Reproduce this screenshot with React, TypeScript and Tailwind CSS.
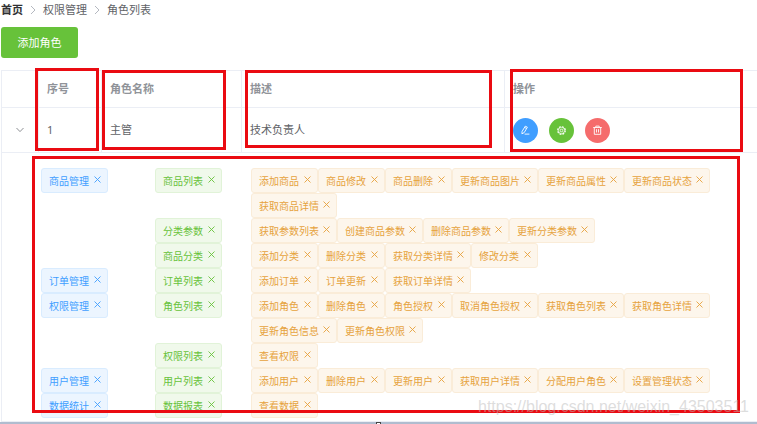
import { useState } from 'react'
import clsx from 'clsx'

type TagType = 'primary' | 'success' | 'warning'

interface Permission {
  name: string
  children: {
    name: string
    actions: string[]
  }[]
}

const rights: Permission[] = [
  {
    name: '商品管理',
    children: [
      {
        name: '商品列表',
        actions: ['添加商品', '商品修改', '商品删除', '更新商品图片', '更新商品属性', '更新商品状态', '获取商品详情'],
      },
      { name: '分类参数', actions: ['获取参数列表', '创建商品参数', '删除商品参数', '更新分类参数'] },
      { name: '商品分类', actions: ['添加分类', '删除分类', '获取分类详情', '修改分类'] },
    ],
  },
  {
    name: '订单管理',
    children: [{ name: '订单列表', actions: ['添加订单', '订单更新', '获取订单详情'] }],
  },
  {
    name: '权限管理',
    children: [
      {
        name: '角色列表',
        actions: ['添加角色', '删除角色', '角色授权', '取消角色授权', '获取角色列表', '获取角色详情', '更新角色信息', '更新角色权限'],
      },
      { name: '权限列表', actions: ['查看权限'] },
    ],
  },
  {
    name: '用户管理',
    children: [
      {
        name: '用户列表',
        actions: ['添加用户', '删除用户', '更新用户', '获取用户详情', '分配用户角色', '设置管理状态'],
      },
    ],
  },
  {
    name: '数据统计',
    children: [{ name: '数据报表', actions: ['查看数据'] }],
  },
]

const tagColors: Record<TagType, string> = {
  primary: 'border-[#d9ecff] bg-[#ecf5ff] text-[#409eff]',
  success: 'border-[#e1f3d8] bg-[#f0f9eb] text-[#67c23a]',
  warning: 'border-[#faecd8] bg-[#fdf6ec] text-[#e6a23c]',
}

function Tag({ type, children }: { type: TagType; children: string }) {
  return (
    <span
      className={clsx(
        'flex h-[25px] shrink-0 items-center justify-between whitespace-nowrap rounded-[3px] border pl-[7px] pr-[6px] text-[10px]',
        children.length > 4 ? 'w-[86px]' : 'w-[67px]',
        tagColors[type],
      )}
    >
      {children}
      <button type="button" aria-label={`移除${children}`} className="pb-[2px]">
        <svg className="h-[7px] w-[7px]" viewBox="0 0 7 7" fill="none" stroke="currentColor" strokeWidth="0.9">
          <path d="M0.5 0.5 6.5 6.5M6.5 0.5 0.5 6.5" />
        </svg>
      </button>
    </span>
  )
}

function Separator() {
  return (
    <svg className="h-[10px] w-[6px]" viewBox="0 0 6 10" fill="none" stroke="#b4b8c0" aria-hidden="true">
      <path d="M1 1 5 5 1 9" />
    </svg>
  )
}

function EditIcon() {
  return (
    <svg className="h-[11px] w-[11px]" viewBox="0 0 11 11" fill="none" stroke="currentColor" strokeWidth="0.9">
      <path d="M5.3 1.2 7.4 2.2 4.2 7.6 1.9 8.8 2.1 6.4ZM4.6 2.4 6.7 3.5M4.6 9.1H9.4" />
    </svg>
  )
}

function SettingIcon() {
  return (
    <svg className="h-[11px] w-[11px]" viewBox="0 0 11 11" fill="none" stroke="currentColor">
      <circle cx="5.5" cy="5.5" r="3.8" strokeWidth="1.2" strokeDasharray="1.9 1.08" />
      <circle cx="5.5" cy="5.5" r="3.1" strokeWidth="0.7" />
      <circle cx="5.5" cy="5.5" r="1.3" strokeWidth="0.8" />
    </svg>
  )
}

function DeleteIcon() {
  return (
    <svg className="h-[11px] w-[11px]" viewBox="0 0 11 11" fill="none" stroke="currentColor" strokeWidth="0.9">
      <path d="M1.2 2.5H9.8M3.8 2.3V1.1H7.2V2.3M2.3 2.6V9.3H8.7V2.6M4.5 4.2V7.5M6.5 4.2V7.5" />
    </svg>
  )
}

const headCell = 'border-b border-r border-[#ebeef5] px-2 text-left font-bold text-[#909399]'
const bodyCell = 'border-b border-r border-[#ebeef5] px-2'
const round = 'flex h-[25px] w-[25px] items-center justify-center rounded-full text-white'
const mark = 'pointer-events-none absolute border-3 border-[#ea0b12]'

export default function App() {
  const [open, setOpen] = useState(true)

  return (
    <div className="relative overflow-hidden bg-white font-['Noto_Sans','Noto_Sans_CJK_SC',sans-serif] text-[11px] leading-4 text-[#606266]">
      <main className="pl-px">
        <nav className="flex items-center gap-[7px] pt-[2px]">
          <a href="#home" className="font-bold text-[#303133]">
            首页
          </a>
          <Separator />
          <a href="#rights">权限管理</a>
          <Separator />
          <span>角色列表</span>
        </nav>

        <button type="button" className="mt-[9px] block h-[31px] w-[77px] rounded-[3px] bg-[#67c23a] text-white">
          添加角色
        </button>

        <table className="mt-3 w-full table-fixed border-separate border-spacing-0 border-l border-t border-[#ebeef5]">
          <colgroup>
            <col className="w-[37px]" />
            <col className="w-[63px]" />
            <col className="w-[140px]" />
            <col className="w-[263px]" />
            <col />
          </colgroup>
          <thead>
            <tr className="h-[37px]">
              <th className={headCell}></th>
              <th className={headCell}>序号</th>
              <th className={headCell}>角色名称</th>
              <th className={headCell}>描述</th>
              <th className="border-b border-[#ebeef5] px-2 text-left font-bold text-[#909399]">操作</th>
            </tr>
          </thead>
          <tbody>
            <tr className="h-[45px]">
              <td className={bodyCell}>
                <button
                  type="button"
                  aria-label="展开"
                  aria-expanded={open}
                  onClick={() => setOpen(!open)}
                  className="flex w-full justify-center"
                >
                  <svg className="h-[6px] w-[8px]" viewBox="0 0 8 6" fill="none" stroke="#808388" strokeWidth="0.9">
                    <path d="M0.5 1 4 4.6 7.5 1" />
                  </svg>
                </button>
              </td>
              <td className={bodyCell}>1</td>
              <td className={bodyCell}>主管</td>
              <td className={bodyCell}>技术负责人</td>
              <td className="border-b border-[#ebeef5] px-2">
                <div className="flex gap-[11px]">
                  <button type="button" aria-label="编辑" className={clsx(round, 'bg-[#409eff]')}>
                    <EditIcon />
                  </button>
                  <button type="button" aria-label="分配权限" className={clsx(round, 'bg-[#67c23a]')}>
                    <SettingIcon />
                  </button>
                  <button type="button" aria-label="删除" className={clsx(round, 'bg-[#f56c6c]')}>
                    <DeleteIcon />
                  </button>
                </div>
              </td>
            </tr>
            {open && (
              <tr>
                <td colSpan={5} className="border-b border-[#ebeef5] pb-[3px] pl-[39px] pr-4 pt-[15px]">
                  {rights.map((item) => (
                    <div key={item.name} className="flex items-start">
                      <div className="w-[114px] shrink-0">
                        <Tag type="primary">{item.name}</Tag>
                      </div>
                      <div className="min-w-0 flex-1">
                        {item.children.map((sub) => (
                          <div key={sub.name} className="flex items-start">
                            <div className="w-24 shrink-0">
                              <Tag type="success">{sub.name}</Tag>
                            </div>
                            <div className="flex min-w-0 flex-1 flex-wrap">
                              {sub.actions.map((action) => (
                                <Tag key={action} type="warning">
                                  {action}
                                </Tag>
                              ))}
                            </div>
                          </div>
                        ))}
                      </div>
                    </div>
                  ))}
                </td>
              </tr>
            )}
          </tbody>
        </table>
      </main>

      {/* Divider with its drag handle */}
      <div className="flex h-[3px] justify-center overflow-hidden bg-[#b0bccf]">
        <span className="h-[5px] w-[5px] border border-[#444] bg-white"></span>
      </div>

      {/* Callout frames */}
      <div className={clsx(mark, 'left-[35px] top-[68px] h-[83px] w-16')}></div>
      <div className={clsx(mark, 'left-[102px] top-[70px] h-20 w-[124px]')}></div>
      <div className={clsx(mark, 'left-[245px] top-[70px] h-[78px] w-[247px]')}></div>
      <div className={clsx(mark, 'left-[510px] top-[69px] h-[83px] w-[233px]')}></div>
      <div className={clsx(mark, 'left-8 top-[156px] h-[257px] w-[708px]')}></div>

      <div className="pointer-events-none absolute bottom-2 right-2 font-['Liberation_Sans',sans-serif] text-[16px] leading-5 text-[#bbbbbb]/50">
        https://blog.csdn.net/weixin_43503511
      </div>
    </div>
  )
}
